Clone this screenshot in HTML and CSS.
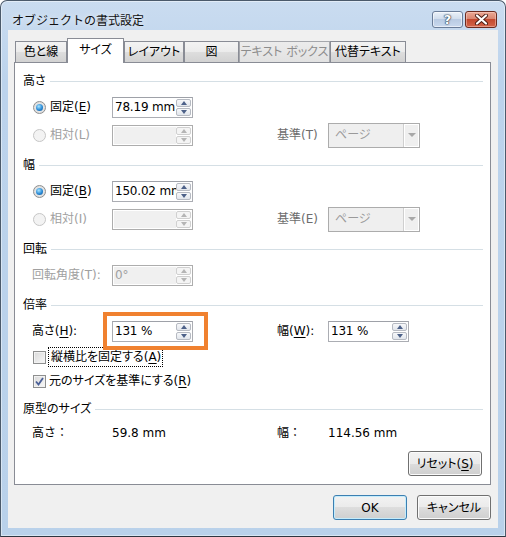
FILE: index.html
```html
<!DOCTYPE html>
<html lang="ja">
<head>
    <meta charset="UTF-8">
    <title>オブジェクトの書式設定</title>
    <link rel="stylesheet" href="styles.css">
</head>
<body>
    <div class="window">
        <div class="titlebar">
            <span class="title">オブジェクトの書式設定</span>
            <div class="caption-btns">
                <span class="cap-btn help">?</span>
                <span class="cap-btn close">
                    <svg width="15" height="11" viewBox="0 0 15 11">
                        <path d="M3 1.5 L12 9.5 M12 1.5 L3 9.5" stroke="#4b1d14" stroke-width="4" stroke-linecap="round"/>
                        <path d="M3 1.5 L12 9.5 M12 1.5 L3 9.5" stroke="#fff" stroke-width="2.2" stroke-linecap="round"/>
                    </svg>
                </span>
            </div>
        </div>

        <div class="client">
            <div class="tabs">
                <span class="tab tab-color">色と線</span>
                <span class="tab tab-size active">サイズ</span>
                <span class="tab tab-layout">レイアウト</span>
                <span class="tab tab-pic">図</span>
                <span class="tab tab-text disabled">テキスト ボックス</span>
                <span class="tab tab-alt">代替テキスト</span>
            </div>

            <div class="panel">
                <!-- 高さ -->
                <div class="group">
                    <div class="group-head"><span>高さ</span></div>
                    <div class="row">
                        <span class="opt"><span class="radio on"></span><span>固定(<u>E</u>)</span></span>
                        <span class="spin"><span class="spin-val">78.19 mm</span><span class="spin-btns"><i class="up"></i><i class="down"></i></span></span>
                    </div>
                    <div class="row">
                        <span class="opt off"><span class="radio"></span><span>相対(L)</span></span>
                        <span class="spin off"><span class="spin-val"></span><span class="spin-btns"><i class="up"></i><i class="down"></i></span></span>
                        <span class="lbl dim">基準(T)</span>
                        <span class="combo">ページ<span class="combo-arrow"></span></span>
                    </div>
                </div>

                <!-- 幅 -->
                <div class="group">
                    <div class="group-head"><span>幅</span></div>
                    <div class="row">
                        <span class="opt"><span class="radio on"></span><span>固定(<u>B</u>)</span></span>
                        <span class="spin"><span class="spin-val">150.02 mm</span><span class="spin-btns"><i class="up"></i><i class="down"></i></span></span>
                    </div>
                    <div class="row">
                        <span class="opt off"><span class="radio"></span><span>相対(I)</span></span>
                        <span class="spin off"><span class="spin-val"></span><span class="spin-btns"><i class="up"></i><i class="down"></i></span></span>
                        <span class="lbl dim">基準(E)</span>
                        <span class="combo">ページ<span class="combo-arrow"></span></span>
                    </div>
                </div>

                <!-- 回転 -->
                <div class="group">
                    <div class="group-head"><span>回転</span></div>
                    <div class="row">
                        <span class="lbl indent off">回転角度(T):</span>
                        <span class="spin off"><span class="spin-val">0°</span><span class="spin-btns"><i class="up"></i><i class="down"></i></span></span>
                    </div>
                </div>

                <!-- 倍率 -->
                <div class="group">
                    <div class="group-head"><span>倍率</span></div>
                    <div class="row">
                        <span class="lbl indent">高さ(<u>H</u>):</span>
                        <span class="mark">
                            <span class="spin"><span class="spin-val">131 %</span><span class="spin-btns"><i class="up"></i><i class="down"></i></span></span>
                        </span>
                        <span class="lbl">幅(<u>W</u>):</span>
                        <span class="spin"><span class="spin-val">131 %</span><span class="spin-btns"><i class="up"></i><i class="down"></i></span></span>
                    </div>
                    <div class="row-check">
                        <span class="check"></span>
                        <span class="focus">縦横比を固定する(<u>A</u>)</span>
                    </div>
                    <div class="row-check">
                        <span class="check">
                            <svg width="11" height="11" viewBox="0 0 11 11"><path d="M2 5.5 L4.5 8.5 L9 2" fill="none" stroke="#4a5f97" stroke-width="1.8"/></svg>
                        </span>
                        <span>元のサイズを基準にする(<u>R</u>)</span>
                    </div>
                </div>

                <!-- 原型のサイズ -->
                <div class="group">
                    <div class="group-head"><span>原型のサイズ</span></div>
                    <div class="row row-info">
                        <span class="lbl indent full">高さ：</span>
                        <span>59.8 mm</span>
                        <span class="lbl full">幅：</span>
                        <span>114.56 mm</span>
                    </div>
                </div>

                <div class="reset-line">
                    <button class="btn">リセット(<u>S</u>)</button>
                </div>
            </div>

            <div class="footer">
                <button class="btn default">OK</button>
                <button class="btn">キャンセル</button>
            </div>
        </div>
    </div>
</body>
</html>
```

FILE: styles.css
```css
* { box-sizing: border-box; }
body {
    margin: 0; font-family: "DejaVu Sans", "Noto Sans CJK JP", sans-serif;
    font-size: 12px; line-height: 16px; color: #000;
    font-feature-settings: "palt";
}
u { text-decoration-thickness: 1px; text-underline-offset: 2px; }

/* window frame */
.window {
    width: 506px; height: 537px; display: flex; flex-direction: column;
    padding: 0 7px 8px; border: 1px solid #4b5a6b; border-bottom-color: #2d3540;
    border-radius: 7px 7px 0 0;
    background: linear-gradient(#cadcf0, #bcd3ec 80px, #b9d1ea);
    box-shadow: inset 0 0 0 1px rgba(255, 255, 255, 0.45);
}
.titlebar {
    height: 29px; padding: 8px 1px 0 4px; flex-shrink: 0;
    display: flex; align-items: center; justify-content: space-between;
}
.title {
    font-family: "Noto Sans CJK JP", sans-serif; font-feature-settings: normal;
    color: #111; text-shadow: 0 0 6px rgba(255, 255, 255, 0.9);
}
.caption-btns { display: flex; gap: 2px; }
.cap-btn {
    height: 17px; border-radius: 3px; display: flex; align-items: center; justify-content: center;
}
.help {
    width: 31px; border: 1px solid #6a7d99;
    background: linear-gradient(#eaf1f9, #d2deed 45%, #b9cbe3 50%, #c9d9ee);
    box-shadow: inset 0 0 0 1px rgba(255, 255, 255, 0.55);
    color: #fff; font-weight: bold; font-size: 13px;
    text-shadow: 0 0 1px #27394f, 0 0 1px #27394f, 0 0 2px #27394f;
}
.close {
    width: 32px; border: 1px solid #6b2a1f;
    background: linear-gradient(#eba995, #d98671 45%, #c3492f 50%, #d3654a);
    box-shadow: inset 0 0 0 1px rgba(255, 220, 210, 0.45);
}

/* client area */
.client {
    flex: 1; background: #f0f0f0; padding: 8px 7px 0 6px;
    display: flex; flex-direction: column;
}

/* tabs */
.tabs { display: flex; align-items: flex-end; height: 24px; padding-left: 1px; }
.tab {
    height: 21px; display: flex; align-items: center; justify-content: center;
    border: 1px solid #898c95; border-bottom: none;
    background: linear-gradient(#f3f3f3, #ebebeb 50%, #dedede 50%, #d2d2d2);
}
.tab.active {
    height: 25px; margin-bottom: -1px; position: relative; z-index: 1;
    background: #fff; padding-bottom: 2px;
}
.tab.disabled { color: #8d8d8d; background: linear-gradient(#ececec, #e2e2e2); border-color: #a5a7ac; }
.tab-color { width: 52px; }
.tab-size { width: 57px; }
.tab-layout { width: 60px; }
.tab-pic { width: 55px; }
.tab-text { width: 91px; }
.tab-alt { width: 76px; }

/* panel */
.panel {
    height: 423px; background: #fff; border: 1px solid #898c95;
    padding: 8px 7px 0 8px;
}
.group + .group { margin-top: 6px; }
.group-head { display: flex; align-items: center; gap: 4px; height: 20px; margin-bottom: 2px; }
.group-head::after { content: ""; flex: 1; height: 1px; background: #d5dfe5; }

.row {
    display: grid; grid-template-columns: 89px 165px 51px 1fr;
    align-items: center; height: 28px;
}
.row-info { height: 24px; }
.opt { display: flex; align-items: center; gap: 4px; padding-left: 10px; }
.lbl.indent { padding-left: 9px; }
.full { font-feature-settings: normal; }
.off { color: #a0a0a0; }
.dim { color: #6d6d6d; }

/* radio */
.radio {
    width: 13px; height: 13px; border-radius: 50%; position: relative;
    border: 1px solid #8e8f8f; background: radial-gradient(circle, #f6f6f6, #d4d4d4);
}
.radio.on::after {
    content: ""; position: absolute; left: 2px; top: 2px; width: 7px; height: 7px; border-radius: 50%;
    background: radial-gradient(circle at 40% 35%, #a9e6ff, #2a8ad6 55%, #0d4f8d);
}
.off .radio { border-color: #c6c6c6; background: #f3f3f3; }

/* spin box */
.spin {
    width: 81px; height: 21px; display: flex; padding: 1px;
    border: 1px solid #abadb3; border-top-color: #9ea1a8; background: #fff;
}
.spin-val {
    flex: 1; padding-left: 1px; line-height: 17px; letter-spacing: -0.2px;
    overflow: hidden; white-space: nowrap;
}
.spin-btns { width: 15px; display: flex; flex-direction: column; gap: 1px; }
.spin-btns i {
    flex: 1; display: flex; align-items: center; justify-content: center;
    border: 1px solid #b6bac2; border-radius: 2px;
    background: linear-gradient(#f7f8fa, #e2e6ec);
}
.spin-btns i::after { content: ""; border-left: 3.5px solid transparent; border-right: 3.5px solid transparent; }
.spin-btns .up::after { border-bottom: 4px solid #4d6189; }
.spin-btns .down::after { border-top: 4px solid #4d6189; }
.spin.off { border-color: #adadad; }
.spin.off .spin-val { background: #f0f0f0; color: #a0a0a0; }
.spin.off .spin-btns i { border-color: #d0d0d0; background: #f4f4f4; }
.spin.off .up::after { border-bottom-color: #b5b5b5; }
.spin.off .down::after { border-top-color: #b5b5b5; }

/* orange annotation around 高さ(H) */
.mark { position: relative; width: 81px; }
.mark::after {
    content: ""; position: absolute; left: -9px; top: -9px; right: -15px; bottom: -8px;
    border: 4px solid #f0812f; pointer-events: none;
}

/* combo */
.combo {
    width: 92px; height: 25px; display: flex; align-items: center; padding-left: 6px;
    border: 1px solid #acacac; background: #efefef; color: #9a9a9a;
}
.combo-arrow {
    margin-left: auto; width: 16px; height: 100%; display: flex; align-items: center; justify-content: center;
    border-left: 1px solid #cfcfcf; box-shadow: inset 1px 1px 0 #fff, inset -1px -1px 0 #fff;
}
.combo-arrow::after {
    content: ""; border-left: 4px solid transparent; border-right: 4px solid transparent;
    border-top: 4px solid #a8a8a8;
}

/* checkboxes */
.row-check { display: flex; align-items: center; gap: 3px; height: 24px; padding-left: 10px; }
.check {
    width: 13px; height: 13px; border: 1px solid #8e8f8f; display: flex; align-items: center; justify-content: center;
    background: linear-gradient(135deg, #d9d9d9, #f8f8f8); box-shadow: inset 0 0 0 1px #f2f2f2;
}
.focus { outline: 1px dotted #000; outline-offset: 0; padding: 1px 1px 1px 2px; }

/* buttons */
.reset-line { display: flex; justify-content: flex-end; margin-top: 6px; padding-right: 1px; }
.btn {
    width: 74px; height: 25px; padding: 0; font: inherit; color: #000;
    border: 1px solid #707070; border-radius: 3px;
    background: linear-gradient(#f2f2f2, #ebebeb 50%, #dddddd 50%, #cfcfcf);
    box-shadow: inset 0 0 0 1px #fbfbfb;
}
.btn.default { border-color: #3c7fb1; box-shadow: inset 0 0 0 1px #c4ecfc; }
.footer { display: flex; justify-content: flex-end; gap: 10px; margin-top: 10px; }
```
